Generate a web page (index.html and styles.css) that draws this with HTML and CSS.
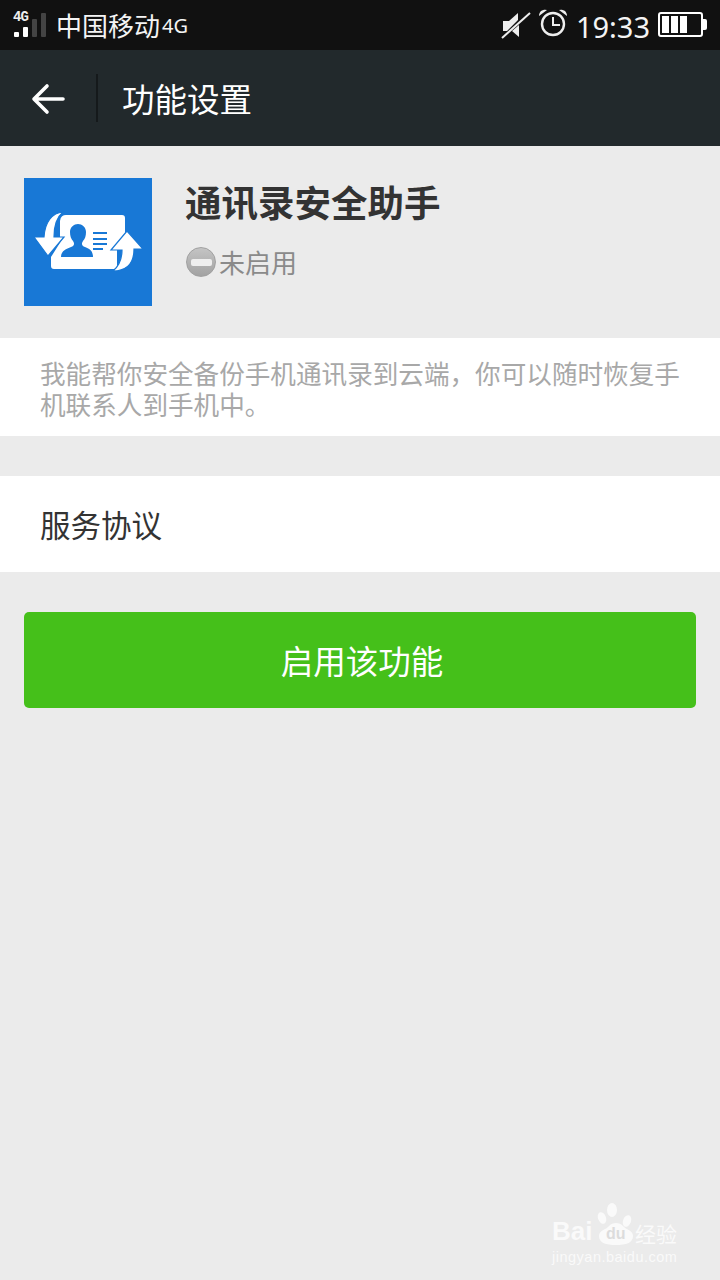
FILE: index.html
```html
<!DOCTYPE html>
<html>
  <head>
    <meta charset="utf-8">
    <title>功能设置</title>
    <link rel="stylesheet" href="styles.css">
  </head>
  <body>
    <div class="status">
      <div class="signal">
        <span class="net">4G</span>
        <svg width="34" height="26" viewBox="0 0 34 26">
          <rect x="1" y="20" width="5" height="5" rx="1" fill="#fff"/>
          <rect x="10" y="15" width="5" height="10" rx="1" fill="#fff"/>
          <rect x="19" y="7" width="5" height="18" rx="1" fill="#444"/>
          <rect x="28" y="1" width="5" height="24" rx="1" fill="#444"/>
        </svg>
      </div>
      <span class="carrier">中国移动</span>
      <span class="carrier-net">4G</span>
      <div class="status-right">
        <svg class="mute" width="30" height="28" viewBox="0 0 30 28">
          <path d="M2 10h6l9-8v7L6 20H2z" fill="#eee"/>
          <path d="M18 14v12l-7-6z" fill="#eee"/>
          <path d="M1 27L29 2" stroke="#eee" stroke-width="2"/>
        </svg>
        <svg class="alarm" width="30" height="30" viewBox="0 0 30 30">
          <circle cx="15" cy="16" r="11" fill="none" stroke="#eee" stroke-width="2.4"/>
          <path d="M15 9v8h7" fill="none" stroke="#eee" stroke-width="2"/>
          <path d="M1 8a6 6 0 0 1 8-6zM29 8a6 6 0 0 0-8-6z" fill="#eee"/>
        </svg>
        <span class="clock">19:33</span>
        <svg class="battery" width="49" height="26" viewBox="0 0 49 26">
          <rect x="1" y="1" width="43" height="23" rx="2" fill="none" stroke="#fff" stroke-width="2"/>
          <rect x="4" y="4" width="7" height="17" fill="#fff"/>
          <rect x="13" y="4" width="7" height="17" fill="#fff"/>
          <rect x="22" y="4" width="7" height="17" fill="#fff"/>
          <path d="M45 7h2a2 2 0 0 1 2 2v7a2 2 0 0 1-2 2h-2z" fill="#fff"/>
        </svg>
      </div>
    </div>

    <div class="toolbar">
      <div class="back">
        <svg width="36" height="34" viewBox="0 0 36 34">
          <path d="M33 17H5M17 4L4 17l13 13" fill="none" stroke="#fff" stroke-width="3.6" stroke-linecap="round" stroke-linejoin="round"/>
        </svg>
      </div>
      <div class="divider"></div>
      <div class="title">功能设置</div>
    </div>

    <div class="plugin">
      <div class="plugin-icon">
        <svg width="128" height="128" viewBox="0 0 128 128">
          <path d="M43 37H98a3 3 0 0 1 3 3V57L88 72H93V88a3 3 0 0 1-3 3H30a3 3 0 0 1-3-3V79L39 60H36V43a6 6 0 0 1 7-6z" fill="#fff"/>
          <path d="M39 34C28 35 21 44 20 59H10L24 78 40 59H30C30 47 33 39 39 34z" fill="#fff" stroke="#1878d6" stroke-width="1.2"/>
          <path d="M103 53L119 71H110C110 85 103 93 89 93 95 88 98 80 98 72H87z" fill="#fff" stroke="#1878d6" stroke-width="1.2"/>
          <path d="M37 79c0-6 5-8 10-10 3-1 4-3 2-6-2-2-3-5-3-9 0-5 4-8 8-8s8 3 8 8c0 4-1 7-3 9-2 3-1 5 2 6 5 2 8 4 8 10z" fill="#1878d6"/>
          <path d="M69 55H83M69 61H83M69 66H83M69 71H79" stroke="#1878d6" stroke-width="2"/>
        </svg>
      </div>
      <div class="plugin-info">
        <div class="plugin-name">通讯录安全助手</div>
        <div class="plugin-state">
          <span class="state-icon"></span>
          <span>未启用</span>
        </div>
      </div>
    </div>

    <div class="desc">我能帮你安全备份手机通讯录到云端&#65292;你可以随时恢复手机联系人到手机中。</div>

    <div class="row">服务协议</div>

    <div class="btn-wrap">
      <div class="btn">启用该功能</div>
    </div>

    <div class="mark">
      <div class="mark-top">
        <span class="mark-bai">Bai</span>
        <svg width="38" height="44" viewBox="0 0 38 44">
          <ellipse cx="5" cy="15" rx="4" ry="6" fill="#fff" transform="rotate(-20 5 15)"/>
          <ellipse cx="15" cy="7" rx="5" ry="7" fill="#fff"/>
          <ellipse cx="30" cy="18" rx="4" ry="6" fill="#fff" transform="rotate(20 30 18)"/>
          <path d="M2 33c0-6 7-6 10-10 3-4 11-4 14 0 3 4 10 4 10 10 0 7-7 9-17 9S2 40 2 33z" fill="#fff"/>
        </svg>
        <span class="mark-du">du</span>
        <span class="mark-cn">经验</span>
      </div>
      <div class="mark-url">jingyan.baidu.com</div>
    </div>
  </body>
</html>
```

FILE: styles.css
```css
body {
  margin:0;
  width:720px;
  height:1280px;
  position:relative;
  overflow:hidden;
  background:#ebebeb;
  color:#333;
  font-family:'Noto Sans CJK SC', 'Noto Sans', sans-serif;
}

.status {
  height:50px;
  background:#111;
  color:#f4f4f4;
  display:flex;
  align-items:center;
  padding:0 13px 0 13px;
  box-sizing:border-box;
}

.signal {
  position:relative;
  width:34px;
  height:40px;
  margin-right:10px;
}

.signal svg {
  position:absolute;
  left:0;
  bottom:7px;
}

.net {
  position:absolute;
  left:0;
  top:6px;
  font:bold 14px/12px 'Liberation Mono', monospace;
  letter-spacing:-1px;
  color:#eee;
}

.carrier {
  font-size:26px;
  line-height:50px;
  margin-left:-1px;
}

.carrier-net {
  font:20px/50px 'Noto Sans', sans-serif;
  margin-left:2px;
  margin-top:2px;
}

.status-right {
  margin-left:auto;
  display:flex;
  align-items:center;
}

.mute {
  margin-right:7px;
}

.alarm {
  margin-right:8px;
  margin-bottom:5px;
}

.clock {
  font:29px/50px 'Noto Sans', sans-serif;
  margin-right:8px;
  margin-top:4px;
}

.toolbar {
  height:96px;
  background:#22292c;
  display:flex;
  align-items:center;
  color:#fff;
}

.back {
  width:96px;
  display:flex;
  justify-content:center;
  padding-top:2px;
}

.divider {
  width:2px;
  height:48px;
  background:#15191b;
}

.title {
  font-size:32.5px;
  margin-left:24px;
  margin-bottom:2px;
}

.plugin {
  display:flex;
  padding:32px 24px;
}

.plugin-icon {
  width:128px;
  height:128px;
  background:#1878d6;
}

.plugin-icon svg {
  display:block;
}

.plugin-info {
  margin-left:33px;
}

.plugin-name {
  font-size:36.5px;
  font-weight:bold;
  line-height:48px;
}

.plugin-state {
  display:flex;
  align-items:center;
  margin-top:16px;
  color:#8a8a8a;
  font-size:26px;
  line-height:40px;
}

.state-icon {
  width:30px;
  height:30px;
  border-radius:50%;
  background:linear-gradient(#c4c4c4, #a2a2a2);
  border:1px solid #a0a0a0;
  box-sizing:border-box;
  margin:0 3px 0 1px;
  position:relative;
}

.state-icon:after {
  content:'';
  position:absolute;
  left:4px;
  right:3px;
  top:11px;
  height:7px;
  border-radius:2px;
  background:#eee;
}

.desc {
  background:#fff;
  height:98px;
  box-sizing:border-box;
  padding:19px 40px 0;
  font-size:25.6px;
  line-height:31px;
  color:#a8a8a8;
}

.row {
  background:#fff;
  height:96px;
  margin-top:40px;
  padding-left:40px;
  font-size:30.5px;
  line-height:96px;
}

.btn-wrap {
  padding:40px 24px;
}

.btn {
  height:96px;
  background:#45c01a;
  border-radius:5px;
  color:#fff;
  text-align:center;
  padding-left:4px;
  box-sizing:border-box;
  font-size:32.5px;
  line-height:96px;
}

.mark {
  position:absolute;
  left:552px;
  top:1203px;
  width:130px;
  color:#fff;
  opacity:.75;
}

.mark-top {
  position:relative;
  height:45px;
}

.mark-top svg {
  position:absolute;
  left:45px;
  top:0;
}

.mark-bai {
  position:absolute;
  left:0;
  top:12px;
  font:bold 26px/32px 'Liberation Sans', sans-serif;
}

.mark-du {
  position:absolute;
  left:54px;
  top:20px;
  font:bold 16px/22px 'Liberation Sans', sans-serif;
  color:#d8d8d8;
}

.mark-cn {
  position:absolute;
  left:83px;
  top:15px;
  font-size:21px;
  line-height:30px;
  white-space:nowrap;
}

.mark-url {
  font:14.5px/18px 'Liberation Sans', sans-serif;
  letter-spacing:.5px;
  white-space:nowrap;
}
```
